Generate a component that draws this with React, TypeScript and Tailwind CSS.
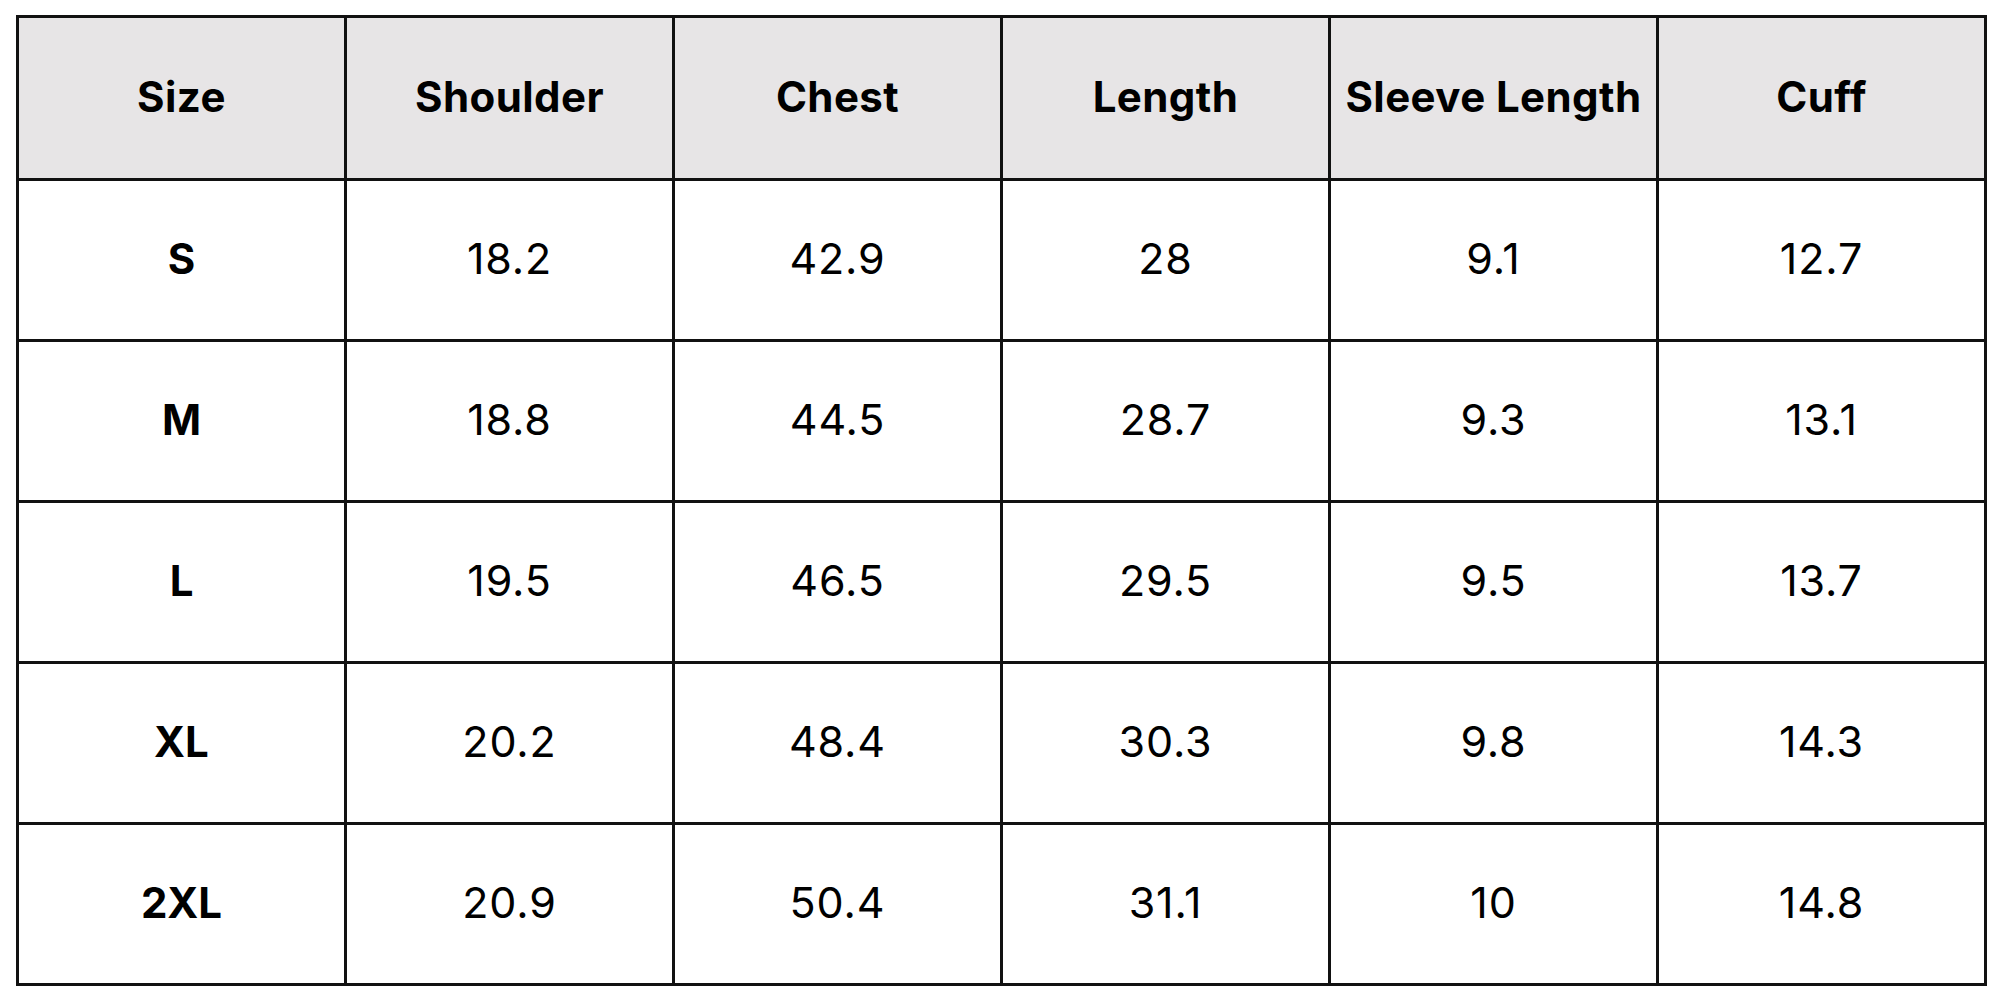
import React from "react";

const headers = ["Size", "Shoulder", "Chest", "Length", "Sleeve Length", "Cuff"];
const rows = [
  ["S", "18.2", "42.9", "28", "9.1", "12.7"],
  ["M", "18.8", "44.5", "28.7", "9.3", "13.1"],
  ["L", "19.5", "46.5", "29.5", "9.5", "13.7"],
  ["XL", "20.2", "48.4", "30.3", "9.8", "14.3"],
  ["2XL", "20.9", "50.4", "31.1", "10", "14.8"],
];

export default function App() {
  return (
    <div className="w-[2000px] h-[1000px] bg-white pl-[16px] pt-[15px]" style={{ fontFamily: "Inter, 'Noto Sans', sans-serif" }}>
      <table className="border-collapse w-[1971px] h-[971px] table-fixed text-black">
        <thead>
          <tr className="h-[163px] bg-[#e7e5e6]">
            {headers.map((h) => (
              <th key={h} className="border-[3px] border-[#111] text-[42px] font-bold text-center align-middle tracking-[0.01em] pb-[3px]">
                {h}
              </th>
            ))}
          </tr>
        </thead>
        <tbody>
          {rows.map((r) => (
            <tr key={r[0]} className="h-[161px]">
              {r.map((c, i) =>
                i === 0 ? (
                  <td key={i} className="border-[3px] border-[#111] text-[42px] font-bold text-center align-middle pb-[3px]">
                    {c}
                  </td>
                ) : (
                  <td key={i} className="border-[3px] border-[#111] text-[43px] font-normal text-center align-middle tracking-[0.02em] pb-[4px]">
                    {c}
                  </td>
                )
              )}
            </tr>
          ))}
        </tbody>
      </table>
    </div>
  );
}
